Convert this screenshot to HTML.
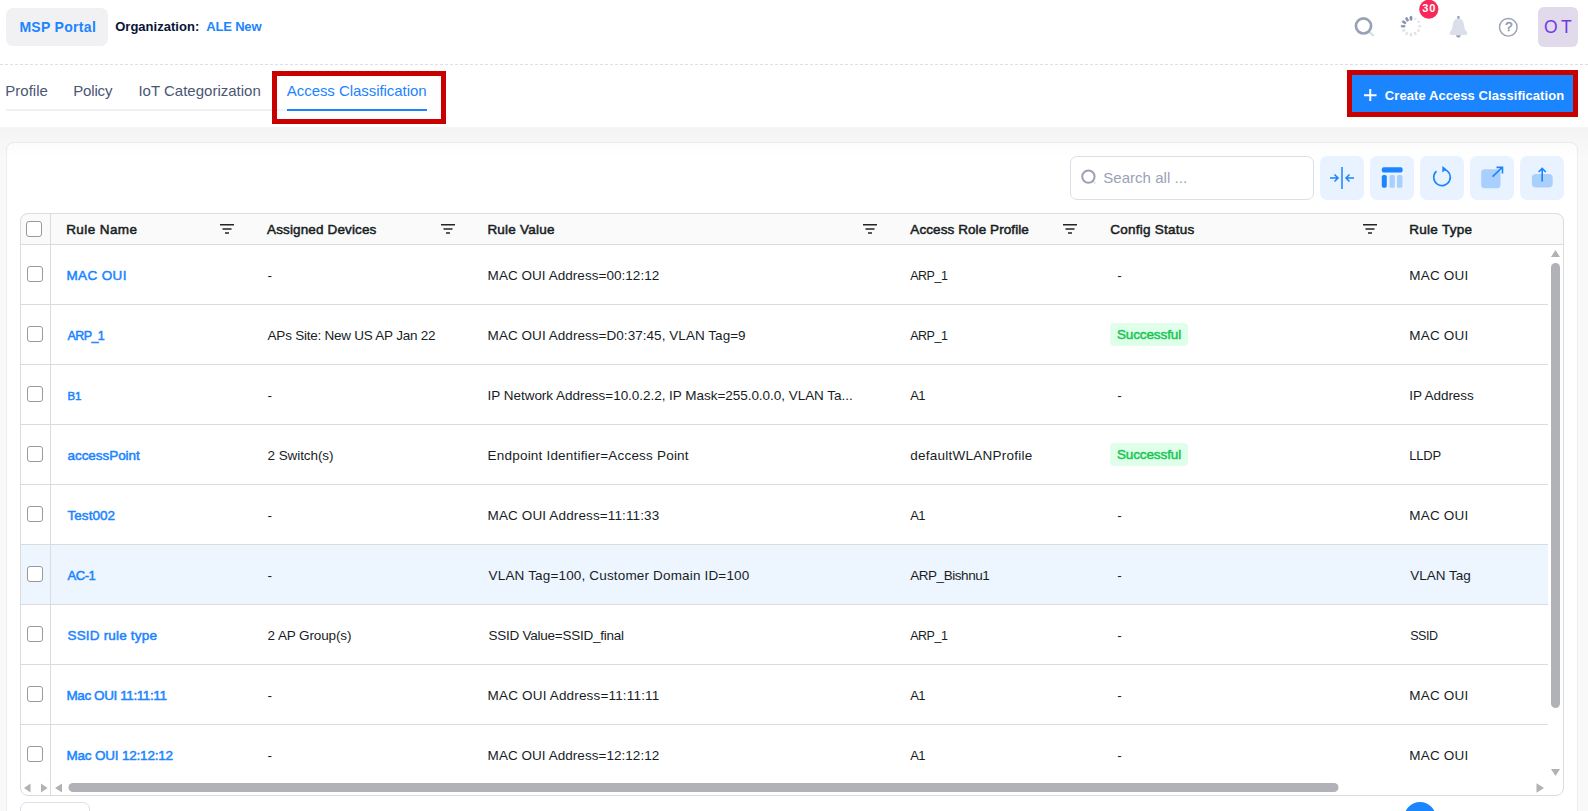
<!DOCTYPE html>
<html lang="en"><head><meta charset="utf-8"><title>Access Classification</title>
<style>
*{box-sizing:border-box;margin:0;padding:0}
html,body{width:1588px;height:811px;overflow:hidden;background:#fff;font-family:"Liberation Sans",sans-serif;color:#181d1f}
.abs{position:absolute}
.t{position:absolute;line-height:20px;white-space:nowrap}
#top{position:absolute;left:0;top:0;width:1588px;height:65px;background:#fff;border-bottom:1px dashed #dbdfe9}
#msp{position:absolute;left:6px;top:8px;width:102px;height:38px;border-radius:7px;background:#f1f1f4}
#tabs{position:absolute;left:0;top:65px;width:1588px;height:62px;background:#fff}
#bg{position:absolute;left:0;top:127px;width:1588px;height:684px;background:#f9f9f9}
#card{position:absolute;left:6px;top:142px;width:1572px;height:700px;background:#fff;border:1px solid #ececf1;border-radius:8px}
#avatar{position:absolute;left:1538px;top:7px;width:40px;height:40px;border-radius:6px;background:#e0daea}
#create{position:absolute;left:1347px;top:70px;width:231px;height:47px;border:5px solid #c80000;background:#1b84ff}
#search{position:absolute;left:1070px;top:156px;width:244px;height:44px;border:1px solid #dbdfe9;border-radius:7px;background:#fff}
.ib{position:absolute;top:156px;width:44px;height:44px;border-radius:7px;background:#e9f3ff}
#tbl{position:absolute;left:20px;top:213px;width:1544px;height:583px;border-radius:8px;background:#fff}
#tblb{position:absolute;left:20px;top:213px;width:1544px;height:583px;border-radius:8px;border:1px solid #dcdcdc;pointer-events:none}
#hdr{position:absolute;left:20px;top:213px;width:1544px;height:32px;background:#fafafa;border-bottom:1px solid #dcdcdc;border-radius:8px 8px 0 0}
.row{position:absolute;left:20px;width:1528px;height:60px;border-bottom:1px solid #dcdcdc;background:#fff}
.row.hl{background:#edf5ff}
.cb{position:absolute;left:7px;top:21px;width:16px;height:16px;border:1px solid #999;border-radius:3px;background:#fff}
.pill{position:absolute;left:1110px;width:78px;height:23px;border-radius:4px;background:#dfffea}
#pin{position:absolute;left:50px;top:213px;width:1px;height:583px;background:#dcdcdc}
</style></head><body>
<div id="top">
  <div id="msp"></div><span class="t " style="left:19.40px;top:17.30px;font-size:14px;letter-spacing:0.310px;font-weight:bold;color:#1b84ff;">MSP Portal</span>
  <span class="t " style="left:115.20px;top:16.80px;font-size:13px;letter-spacing:0.021px;font-weight:bold;color:#071437;">Organization:</span><span class="t " style="left:206.30px;top:16.80px;font-size:13px;letter-spacing:-0.188px;font-weight:bold;color:#1b84ff;">ALE New</span>
  <svg class="abs" style="left:1340px;top:0" width="248" height="60" viewBox="0 0 248 60"><path d="M29.600 32.300l3.400 2.900" stroke="#dbdfe9" stroke-width="2.400" stroke-linecap="round"/><circle cx="23.500" cy="25.950" r="7.550" fill="none" stroke="#99a1b7" stroke-width="2.700"/>
  <g transform="translate(71 26.200)"><rect x="-1.3" y="-10.200" width="2.6" height="4.6" rx="1.200" fill="#8790ab" transform="rotate(0)"/><rect x="-1.2" y="-10.200" width="2.4" height="3.0" rx="1.200" fill="#e9ebf1" transform="rotate(30)"/><rect x="-1.2" y="-10.200" width="2.4" height="3.0" rx="1.200" fill="#e6e8ef" transform="rotate(60)"/><rect x="-1.2" y="-10.200" width="2.4" height="3.0" rx="1.200" fill="#e3e5ed" transform="rotate(90)"/><rect x="-1.2" y="-10.200" width="2.4" height="3.0" rx="1.200" fill="#dfe2ea" transform="rotate(120)"/><rect x="-1.2" y="-10.200" width="2.4" height="3.6" rx="1.200" fill="#dfe2ea" transform="rotate(150)"/><rect x="-1.2" y="-10.200" width="2.4" height="3.6" rx="1.200" fill="#dfe2ea" transform="rotate(180)"/><rect x="-1.2" y="-10.200" width="2.4" height="3.6" rx="1.200" fill="#dfe2ea" transform="rotate(210)"/><rect x="-1.2" y="-10.200" width="2.4" height="3.6" rx="1.200" fill="#dfe2ea" transform="rotate(240)"/><rect x="-1.3" y="-10.200" width="2.6" height="4.6" rx="1.200" fill="#939bb3" transform="rotate(270)"/><rect x="-1.3" y="-10.200" width="2.6" height="4.6" rx="1.200" fill="#8d96af" transform="rotate(300)"/><rect x="-1.3" y="-10.200" width="2.6" height="4.6" rx="1.200" fill="#8a93ad" transform="rotate(330)"/></g>
  <circle cx="88.800" cy="9.250" r="9.550" fill="#f8285a"/>
  <rect x="117.150" y="15.900" width="2.500" height="3.500" rx=".8" fill="#99a1b7"/><path d="M116.100 35.200h4.600c0 1.600-1 2.400-2.300 2.400s-2.300-.8-2.300-2.400z" fill="#99a1b7"/>
  <path d="M118.400 18.400C115.300 18.400 113.300 20.500 112.900 24.500L112.200 28C111.900 29.500 111 30.500 110 31.800C109.200 33 109.500 35.100 111.500 35.100L125.300 35.100C127.300 35.100 127.600 33 126.800 31.800C125.800 30.500 124.900 29.500 124.600 28L123.900 24.500C123.500 20.500 121.500 18.400 118.400 18.400Z" fill="#dbdfe9"/>
  <circle cx="168.300" cy="27.300" r="8.800" fill="none" stroke="#99a1b7" stroke-width="1.400"/></svg>
  <span class="t " style="left:1422.30px;top:-2.00px;font-size:11px;letter-spacing:0.782px;font-weight:bold;color:#fff;">30</span>
  <span class="t " style="left:1505.30px;top:17.40px;font-size:13px;letter-spacing:0.000px;-webkit-text-stroke:0.5px;color:#8f97b0;">?</span>
  <div id="avatar"></div><span class="t " style="left:1543.90px;top:16.90px;font-size:17.5px;letter-spacing:-0.487px;color:#7239ea;">O T</span>
</div>
<div id="tabs">
  <div class="abs" style="left:6px;top:44px;width:281px;height:2px;background:#f1f1f4"></div>
  <div class="abs" style="left:287px;top:44px;width:140px;height:2px;background:#1b84ff"></div>
  <div class="abs" style="left:272px;top:6px;width:174px;height:53px;border:5px solid #c80000"></div>
</div>
<span class="t " style="left:5.20px;top:80.50px;font-size:15px;letter-spacing:0.038px;color:#4b5675;">Profile</span><span class="t " style="left:73.20px;top:80.50px;font-size:15px;letter-spacing:-0.162px;color:#4b5675;">Policy</span><span class="t " style="left:138.40px;top:80.50px;font-size:15px;letter-spacing:0.005px;color:#4b5675;">IoT Categorization</span><span class="t " style="left:286.80px;top:80.50px;font-size:15px;letter-spacing:-0.057px;color:#1b84ff;">Access Classification</span>
<div id="create"><svg class="abs" style="left:12.200px;top:13.900px" width="12.500" height="12.500" viewBox="0 0 12.500 12.500"><path d="M6.250 0v12.500M0 6.250h12.500" stroke="#fff" stroke-width="2"/></svg></div>
<span class="t " style="left:1384.80px;top:85.50px;font-size:13px;letter-spacing:0.077px;font-weight:bold;color:#fff;">Create Access Classification</span>
<div id="bg"></div>
<div id="card"></div>
<div class="abs" style="left:0;top:127px;width:1588px;height:32px;background:linear-gradient(to bottom,rgba(20,20,40,.022),rgba(20,20,40,0))"></div>
<div id="search"><svg class="abs" style="left:9px;top:12px" width="18" height="18" viewBox="0 0 18 18"><path d="M13 12.200l2 1.800" stroke="#dbdfe9" stroke-width="1.600" stroke-linecap="round"/><circle cx="8.400" cy="7.600" r="6.200" fill="none" stroke="#99a1b7" stroke-width="2"/></svg></div>
<span class="t " style="left:1103.20px;top:167.90px;font-size:15px;letter-spacing:0.046px;color:#99a1b7;">Search all ...</span>
<div class="ib" style="left:1320px"><svg width="44" height="44" viewBox="0 0 44 44"><path d="M22 11v22M10 22h8M14.500 18.500l3.500 3.500-3.500 3.500M34 22h-8M29.500 18.500l-3.500 3.500 3.500 3.500" fill="none" stroke="#1b84ff" stroke-width="1.500"/></svg></div>
<div class="ib" style="left:1370px"><svg width="44" height="44" viewBox="0 0 44 44"><rect x="11.800" y="11.200" width="20.800" height="5.400" rx="1.800" fill="#1b84ff"/><rect x="11.800" y="19" width="5" height="12.800" rx="1.800" fill="#1b84ff"/><rect x="19.500" y="19" width="5.300" height="12.800" rx="1.500" fill="#a9cffc"/><rect x="27" y="19" width="5.400" height="12.800" rx="1.500" fill="#a9cffc"/></svg></div>
<div class="ib" style="left:1420px"><svg width="44" height="44" viewBox="0 0 44 44"><path d="M24.500 13.400A8.300 8.300 0 1 1 16 15.600" fill="none" stroke="#1b84ff" stroke-width="1.600" stroke-linecap="round"/><path d="M22.300 10l4.300 3.200-4.300 3.200z" fill="#1b84ff"/></svg></div>
<div class="ib" style="left:1470px"><svg width="44" height="44" viewBox="0 0 44 44"><rect x="11.200" y="13.200" width="19.300" height="19" rx="3.500" fill="#a9cffc"/><path d="M22.600 20.700l9.400-9M26.500 11.400h6v6" fill="none" stroke="#1b84ff" stroke-width="1.600"/></svg></div>
<div class="ib" style="left:1520px"><svg width="44" height="44" viewBox="0 0 44 44"><rect x="11.900" y="18" width="20.800" height="13.400" rx="4" fill="#a9cffc"/><path d="M22.200 25.600v-13M18.600 16l3.600-3.600 3.600 3.600" fill="none" stroke="#1b84ff" stroke-width="1.600"/></svg></div>
<div id="tbl"></div>
<div id="hdr"><i class="cb" style="left:6px;top:8px"></i></div>
<span class="t " style="left:66.20px;top:219.70px;font-size:13.5px;letter-spacing:0.410px;-webkit-text-stroke:0.5px;">Rule Name</span><svg class="abs" style="left:220px;top:224px" width="14" height="10" viewBox="0 0 14 10"><path d="M0 .75h14M2.500 4.900h9M5 9h4" stroke="#252525" stroke-width="1.500" fill="none"/></svg><span class="t " style="left:267.00px;top:219.70px;font-size:13.5px;letter-spacing:0.137px;-webkit-text-stroke:0.5px;">Assigned Devices</span><svg class="abs" style="left:441px;top:224px" width="14" height="10" viewBox="0 0 14 10"><path d="M0 .75h14M2.500 4.900h9M5 9h4" stroke="#252525" stroke-width="1.500" fill="none"/></svg><span class="t " style="left:487.40px;top:219.70px;font-size:13.5px;letter-spacing:0.219px;-webkit-text-stroke:0.5px;">Rule Value</span><svg class="abs" style="left:863px;top:224px" width="14" height="10" viewBox="0 0 14 10"><path d="M0 .75h14M2.500 4.900h9M5 9h4" stroke="#252525" stroke-width="1.500" fill="none"/></svg><span class="t " style="left:910.30px;top:219.70px;font-size:13.5px;letter-spacing:0.081px;-webkit-text-stroke:0.5px;">Access Role Profile</span><svg class="abs" style="left:1063px;top:224px" width="14" height="10" viewBox="0 0 14 10"><path d="M0 .75h14M2.500 4.900h9M5 9h4" stroke="#252525" stroke-width="1.500" fill="none"/></svg><span class="t " style="left:1110.30px;top:219.70px;font-size:13.5px;letter-spacing:0.250px;-webkit-text-stroke:0.5px;">Config Status</span><svg class="abs" style="left:1363px;top:224px" width="14" height="10" viewBox="0 0 14 10"><path d="M0 .75h14M2.500 4.900h9M5 9h4" stroke="#252525" stroke-width="1.500" fill="none"/></svg><span class="t " style="left:1409.20px;top:219.70px;font-size:13.5px;letter-spacing:0.291px;-webkit-text-stroke:0.5px;">Rule Type</span>
<div class="row" style="top:245px"><i class="cb"></i></div><span class="t " style="left:66.50px;top:265.50px;font-size:13.5px;letter-spacing:0.367px;-webkit-text-stroke:0.5px;color:#1b84ff;">MAC OUI</span><span class="t " style="left:267.60px;top:265.50px;font-size:13.5px;letter-spacing:0.000px;">-</span><span class="t " style="left:487.60px;top:265.50px;font-size:13.5px;letter-spacing:0.041px;">MAC OUI Address=00:12:12</span><span class="t " style="left:910.20px;top:266.00px;font-size:12.5px;letter-spacing:-0.488px;">ARP_1</span><span class="t " style="left:1117.30px;top:265.50px;font-size:13.5px;letter-spacing:0.000px;">-</span><span class="t " style="left:1409.30px;top:265.50px;font-size:13.5px;letter-spacing:0.200px;">MAC OUI</span>
<div class="row" style="top:305px"><i class="cb"></i></div><span class="t " style="left:67.50px;top:326.00px;font-size:12.5px;letter-spacing:-0.588px;-webkit-text-stroke:0.5px;color:#1b84ff;">ARP_1</span><span class="t " style="left:267.60px;top:325.50px;font-size:13.5px;letter-spacing:-0.237px;">APs Site: New US AP Jan 22</span><span class="t " style="left:487.60px;top:325.50px;font-size:13.5px;letter-spacing:0.047px;">MAC OUI Address=D0:37:45, VLAN Tag=9</span><span class="t " style="left:910.20px;top:326.00px;font-size:12.5px;letter-spacing:-0.488px;">ARP_1</span><div class="pill" style="top:323px"></div><span class="t " style="left:1116.90px;top:325.20px;font-size:13.5px;letter-spacing:-0.109px;-webkit-text-stroke:0.5px;color:#17c653;">Successful</span><span class="t " style="left:1409.30px;top:325.50px;font-size:13.5px;letter-spacing:0.200px;">MAC OUI</span>
<div class="row" style="top:365px"><i class="cb"></i></div><span class="t " style="left:67.50px;top:386.00px;font-size:11.5px;letter-spacing:-0.270px;-webkit-text-stroke:0.5px;color:#1b84ff;">B1</span><span class="t " style="left:267.60px;top:385.50px;font-size:13.5px;letter-spacing:0.000px;">-</span><span class="t " style="left:487.60px;top:385.50px;font-size:13.5px;letter-spacing:-0.033px;">IP Network Address=10.0.2.2, IP Mask=255.0.0.0, VLAN Ta...</span><span class="t " style="left:910.20px;top:385.50px;font-size:13px;letter-spacing:-0.671px;">A1</span><span class="t " style="left:1117.30px;top:385.50px;font-size:13.5px;letter-spacing:0.000px;">-</span><span class="t " style="left:1409.30px;top:385.50px;font-size:13.5px;letter-spacing:-0.076px;">IP Address</span>
<div class="row" style="top:425px"><i class="cb"></i></div><span class="t " style="left:67.50px;top:445.50px;font-size:13.5px;letter-spacing:-0.054px;-webkit-text-stroke:0.5px;color:#1b84ff;">accessPoint</span><span class="t " style="left:267.60px;top:445.50px;font-size:13.5px;letter-spacing:-0.087px;">2 Switch(s)</span><span class="t " style="left:487.60px;top:445.50px;font-size:13.5px;letter-spacing:0.200px;">Endpoint Identifier=Access Point</span><span class="t " style="left:910.20px;top:445.50px;font-size:13.5px;letter-spacing:0.247px;">defaultWLANProfile</span><div class="pill" style="top:443px"></div><span class="t " style="left:1116.90px;top:445.20px;font-size:13.5px;letter-spacing:-0.109px;-webkit-text-stroke:0.5px;color:#17c653;">Successful</span><span class="t " style="left:1409.30px;top:445.50px;font-size:13px;letter-spacing:-0.249px;">LLDP</span>
<div class="row" style="top:485px"><i class="cb"></i></div><span class="t " style="left:67.50px;top:505.50px;font-size:13.5px;letter-spacing:0.054px;-webkit-text-stroke:0.5px;color:#1b84ff;">Test002</span><span class="t " style="left:267.60px;top:505.50px;font-size:13.5px;letter-spacing:0.000px;">-</span><span class="t " style="left:487.60px;top:505.50px;font-size:13.5px;letter-spacing:0.128px;">MAC OUI Address=11:11:33</span><span class="t " style="left:910.20px;top:505.50px;font-size:13px;letter-spacing:-0.671px;">A1</span><span class="t " style="left:1117.30px;top:505.50px;font-size:13.5px;letter-spacing:0.000px;">-</span><span class="t " style="left:1409.30px;top:505.50px;font-size:13.5px;letter-spacing:0.200px;">MAC OUI</span>
<div class="row hl" style="top:545px"><i class="cb"></i></div><span class="t " style="left:67.50px;top:565.50px;font-size:13px;letter-spacing:-0.429px;-webkit-text-stroke:0.5px;color:#1b84ff;">AC-1</span><span class="t " style="left:267.60px;top:565.50px;font-size:13.5px;letter-spacing:0.000px;">-</span><span class="t " style="left:488.60px;top:565.50px;font-size:13.5px;letter-spacing:0.165px;">VLAN Tag=100, Customer Domain ID=100</span><span class="t " style="left:910.20px;top:565.50px;font-size:13.5px;letter-spacing:-0.444px;">ARP_Bishnu1</span><span class="t " style="left:1117.30px;top:565.50px;font-size:13.5px;letter-spacing:0.000px;">-</span><span class="t " style="left:1410.30px;top:565.50px;font-size:13.5px;letter-spacing:-0.025px;">VLAN Tag</span>
<div class="row" style="top:605px"><i class="cb"></i></div><span class="t " style="left:67.50px;top:625.50px;font-size:13.5px;letter-spacing:0.182px;-webkit-text-stroke:0.5px;color:#1b84ff;">SSID rule type</span><span class="t " style="left:267.60px;top:625.50px;font-size:13.5px;letter-spacing:-0.115px;">2 AP Group(s)</span><span class="t " style="left:488.60px;top:625.50px;font-size:13.5px;letter-spacing:-0.253px;">SSID Value=SSID_final</span><span class="t " style="left:910.20px;top:626.00px;font-size:12.5px;letter-spacing:-0.488px;">ARP_1</span><span class="t " style="left:1117.30px;top:625.50px;font-size:13.5px;letter-spacing:0.000px;">-</span><span class="t " style="left:1410.30px;top:626.00px;font-size:12.5px;letter-spacing:-0.516px;">SSID</span>
<div class="row" style="top:665px"><i class="cb"></i></div><span class="t " style="left:66.50px;top:685.50px;font-size:13.5px;letter-spacing:-0.409px;-webkit-text-stroke:0.5px;color:#1b84ff;">Mac OUI 11:11:11</span><span class="t " style="left:267.60px;top:685.50px;font-size:13.5px;letter-spacing:0.000px;">-</span><span class="t " style="left:487.60px;top:685.50px;font-size:13.5px;letter-spacing:0.172px;">MAC OUI Address=11:11:11</span><span class="t " style="left:910.20px;top:685.50px;font-size:13px;letter-spacing:-0.671px;">A1</span><span class="t " style="left:1117.30px;top:685.50px;font-size:13.5px;letter-spacing:0.000px;">-</span><span class="t " style="left:1409.30px;top:685.50px;font-size:13.5px;letter-spacing:0.200px;">MAC OUI</span>
<div class="row" style="top:725px"><i class="cb"></i></div><span class="t " style="left:66.50px;top:745.50px;font-size:13.5px;letter-spacing:-0.197px;-webkit-text-stroke:0.5px;color:#1b84ff;">Mac OUI 12:12:12</span><span class="t " style="left:267.60px;top:745.50px;font-size:13.5px;letter-spacing:0.000px;">-</span><span class="t " style="left:487.60px;top:745.50px;font-size:13.5px;letter-spacing:0.041px;">MAC OUI Address=12:12:12</span><span class="t " style="left:910.20px;top:745.50px;font-size:13px;letter-spacing:-0.671px;">A1</span><span class="t " style="left:1117.30px;top:745.50px;font-size:13.5px;letter-spacing:0.000px;">-</span><span class="t " style="left:1409.30px;top:745.50px;font-size:13.5px;letter-spacing:0.200px;">MAC OUI</span>
<div class="abs" style="left:21px;top:778px;width:1542px;height:17px;background:#fff;border-radius:0 0 8px 8px"></div>
<div id="pin"></div>
<svg class="abs" style="left:20px;top:778px" width="1544" height="18" viewBox="0 0 1544 18"><g fill="#b1b2b7"><path d="M4 10l6.500-4.500v9zM27.500 10l-6.500-4.500v9zM35 10l7-4.500v9zM1524 10l-7.500-4.700v9.400z"/><rect x="48.500" y="5" width="1270" height="9" rx="4.500"/></g></svg>
<svg class="abs" style="left:1548px;top:245px" width="16" height="533" viewBox="0 0 16 533"><g fill="#b1b2b7"><path d="M7.500 5l4.500 7h-9zM7.500 531l4.500-7h-9z"/><rect x="3" y="18" width="9" height="445" rx="4.500"/></g></svg>
<div id="tblb"></div>
<div class="abs" style="left:20px;top:802px;width:70px;height:40px;border:1px solid #dbdfe9;border-radius:7px;background:#fff"></div>
<div class="abs" style="left:1403.600px;top:802px;width:32.800px;height:32.800px;border-radius:17px;background:#1b84ff"></div>
</body></html>
